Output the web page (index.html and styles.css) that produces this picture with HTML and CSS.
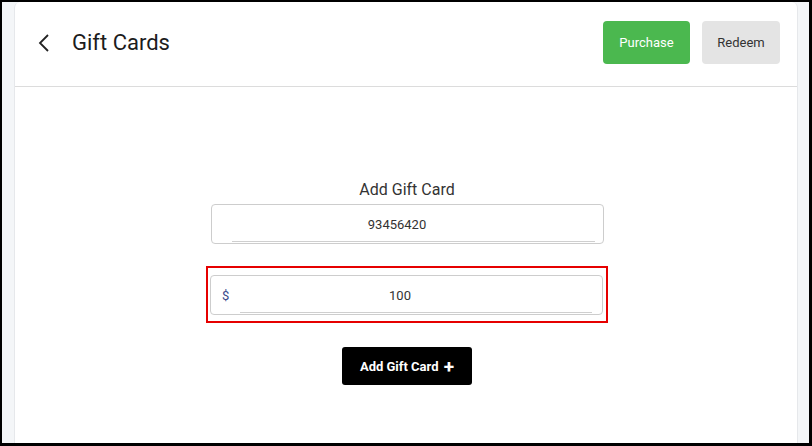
FILE: index.html
```html
<!DOCTYPE html>
<html>
  <head>
    <meta charset="utf-8">
    <meta name="viewport" content="width=device-width, initial-scale=1.0">
    <title>Gift Cards</title>
    <link rel="stylesheet" href="styles.css">
  </head>
  <body>
  <div class="frame">
    <div class="page">
      <div class="card">
        <header class="topbar">
          <div class="topbar__title">
            <span class="back">
              <svg width="14" height="20" viewBox="0 0 14 20"><path d="M11 2 L3 10 L11 18" fill="none" stroke="#222" stroke-width="1.8"/></svg>
            </span>
            <h1>Gift Cards</h1>
          </div>
          <div class="topbar__actions">
            <button class="btn btn--green">Purchase</button>
            <button class="btn btn--grey">Redeem</button>
          </div>
        </header>
        <main class="giftcard">
          <h2>Add Gift Card</h2>
          <div class="field field--code">
            <span class="field__value">93456420</span>
            <span class="field__line field__line--code"></span>
          </div>
          <div class="highlight">
            <div class="field field--amount">
              <span class="field__prefix">$</span>
              <span class="field__value">100</span>
              <span class="field__line field__line--amount"></span>
            </div>
          </div>
          <button class="btn btn--black">Add Gift Card <span class="plus">+</span></button>
        </main>
      </div>
    </div>
  </div>
  </body>
</html>
```

FILE: styles.css
```css
* {
  box-sizing: border-box;
  font-family: Roboto, "Liberation Sans", Arial, sans-serif;
  margin: 0;
}

body, html {
  margin: 0;
  width: 100%;
  height: 100vh;
  background: #000;
}

.frame {
  height: 100%;
  padding: 2px 3px 3px 2px;
}

.page {
  height: 100%;
  background: #f4f6f8;
  padding: 0 11px 0 12px;
}

.card {
  height: 100%;
  background: #fff;
  border-left: 1px solid #e6e8eb;
  border-right: 1px solid #e6e8eb;
  border-radius: 6px 6px 0 0;
  display: flex;
  flex-direction: column;
}

.topbar {
  height: 85px;
  border-bottom: 1px solid #dcdcdc;
  display: flex;
  justify-content: space-between;
  align-items: flex-start;
  padding: 19px 17px 0 22px;
}

.topbar__title {
  display: flex;
  align-items: center;
  height: 43px;
}

.back {
  display: flex;
  width: 35px;
}

.topbar h1 {
  font-size: 22px;
  font-weight: 400;
  color: #1c1c1c;
}

.topbar__actions {
  display: flex;
  gap: 12px;
}

.btn {
  border: none;
  border-radius: 4px;
  font-size: 13px;
  height: 43px;
  cursor: pointer;
}

.btn--green {
  background: #4bb84f;
  color: #fff;
  width: 87px;
}

.btn--grey {
  background: #e4e4e4;
  color: #333;
  width: 78px;
}

.giftcard {
  flex: 1;
  display: flex;
  flex-direction: column;
  align-items: center;
  padding: 93px 0 0 2px;
}

.giftcard h2 {
  font-size: 16px;
  font-weight: 400;
  color: #333;
  margin-bottom: 5px;
}

.field {
  position: relative;
  width: 393px;
  height: 40px;
  border: 1px solid #cdcdcd;
  border-radius: 4px;
  display: flex;
  align-items: center;
  justify-content: center;
}

.field--code {
  padding-right: 20px;
}

.field--amount {
  padding-right: 13px;
}

.field__value {
  font-size: 13px;
  color: #333;
}

.field__prefix {
  position: absolute;
  left: 11px;
  font-size: 13px;
  color: #3b4a8c;
}

.field__line {
  position: absolute;
  bottom: 1px;
  height: 1px;
  background: #cfcfcf;
}

.field__line--code {
  left: 20px;
  right: 8px;
}

.field__line--amount {
  left: 29px;
  right: 10px;
}

.highlight {
  margin-top: 22px;
  border: 2px solid #e60000;
  padding: 7px 3px 6px 2px;
}

.btn--black {
  margin-top: 24px;
  background: #000;
  color: #fff;
  font-weight: 700;
  font-size: 13px;
  width: 130px;
  height: 38px;
  border-radius: 3px;
}

.plus {
  font-size: 19px;
  font-weight: 700;
  vertical-align: -2px;
  margin-left: 2px;
}
```
